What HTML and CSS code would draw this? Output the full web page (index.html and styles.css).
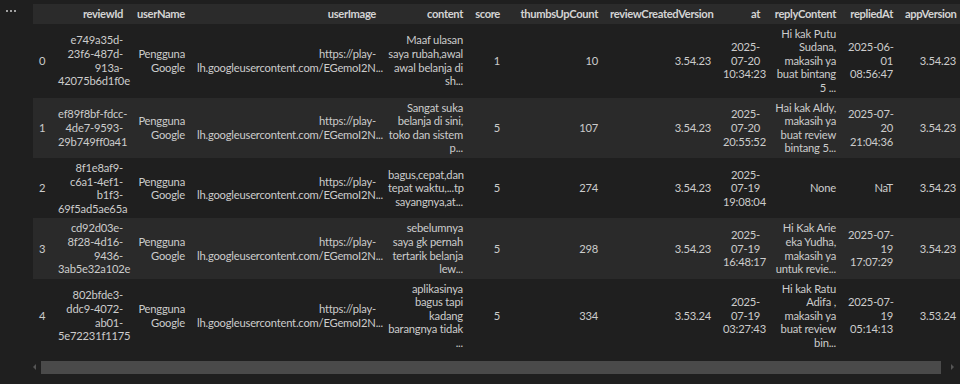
FILE: index.html
```html
<!DOCTYPE html>
<html>
<head>
<meta charset="utf-8">
<link rel="stylesheet" href="styles.css">
</head>
<body>
<div class="cell">
  <div class="gutter"><span class="dots"><i></i><i></i><i></i></span></div>
  <div class="output">
    <div class="viewport">
      <table class="df">
        <colgroup>
          <col class="c-idx"><col class="c-rid"><col class="c-un"><col class="c-ui"><col class="c-ct"><col class="c-sc"><col class="c-tu"><col class="c-rcv"><col class="c-at"><col class="c-rc"><col class="c-ra"><col class="c-av">
        </colgroup>
        <thead>
          <tr><th></th><th>reviewId</th><th>userName</th><th>userImage</th><th>content</th><th>score</th><th>thumbsUpCount</th><th>reviewCreatedVersion</th><th>at</th><th>replyContent</th><th>repliedAt</th><th>appVersion</th></tr>
        </thead>
        <tbody>
          <tr>
            <th>0</th>
            <td>e749a35d-<br>23f6-487d-<br>913a-<br>42075b6d1f0e</td>
            <td>Pengguna<br>Google</td>
            <td>https://play-<br>lh.googleusercontent.com/EGemoI2N...</td>
            <td>Maaf ulasan<br>saya rubah,awal<br>awal belanja di<br>sh...</td>
            <td>1</td><td>10</td><td>3.54.23</td>
            <td>2025-<br>07-20<br>10:34:23</td>
            <td>Hi kak Putu<br>Sudana,<br>makasih ya<br>buat bintang<br>5 ...</td>
            <td>2025-06-<br>01<br>08:56:47</td>
            <td>3.54.23</td>
          </tr>
          <tr>
            <th>1</th>
            <td>ef89f8bf-fdcc-<br>4de7-9593-<br>29b749ff0a41</td>
            <td>Pengguna<br>Google</td>
            <td>https://play-<br>lh.googleusercontent.com/EGemoI2N...</td>
            <td>Sangat suka<br>belanja di sini,<br>toko dan sistem<br>p...</td>
            <td>5</td><td>107</td><td>3.54.23</td>
            <td>2025-<br>07-20<br>20:55:52</td>
            <td>Hai kak Aldy,<br>makasih ya<br>buat review<br>bintang 5...</td>
            <td>2025-07-<br>20<br>21:04:36</td>
            <td>3.54.23</td>
          </tr>
          <tr>
            <th>2</th>
            <td>8f1e8af9-<br>c6a1-4ef1-<br>b1f3-<br>69f5ad5ae65a</td>
            <td>Pengguna<br>Google</td>
            <td>https://play-<br>lh.googleusercontent.com/EGemoI2N...</td>
            <td>bagus,cepat,dan<br>tepat waktu,...tp<br>sayangnya,at...</td>
            <td>5</td><td>274</td><td>3.54.23</td>
            <td>2025-<br>07-19<br>19:08:04</td>
            <td>None</td>
            <td>NaT</td>
            <td>3.54.23</td>
          </tr>
          <tr>
            <th>3</th>
            <td>cd92d03e-<br>8f28-4d16-<br>9436-<br>3ab5e32a102e</td>
            <td>Pengguna<br>Google</td>
            <td>https://play-<br>lh.googleusercontent.com/EGemoI2N...</td>
            <td>sebelumnya<br>saya gk pernah<br>tertarik belanja<br>lew...</td>
            <td>5</td><td>298</td><td>3.54.23</td>
            <td>2025-<br>07-19<br>16:48:17</td>
            <td>Hi Kak Arie<br>eka Yudha,<br>makasih ya<br>untuk revie...</td>
            <td>2025-07-<br>19<br>17:07:29</td>
            <td>3.54.23</td>
          </tr>
          <tr>
            <th>4</th>
            <td>802bfde3-<br>ddc9-4072-<br>ab01-<br>5e72231f1175</td>
            <td>Pengguna<br>Google</td>
            <td>https://play-<br>lh.googleusercontent.com/EGemoI2N...</td>
            <td>aplikasinya<br>bagus tapi<br>kadang<br>barangnya tidak<br>...</td>
            <td>5</td><td>334</td><td>3.53.24</td>
            <td>2025-<br>07-19<br>03:27:43</td>
            <td>Hi kak Ratu<br>Adifa ,<br>makasih ya<br>buat review<br>bin...</td>
            <td>2025-07-<br>19<br>05:14:13</td>
            <td>3.53.24</td>
          </tr>
        </tbody>
      </table>
    </div>
    <div class="hscroll">
      <span class="arrow left"></span>
      <span class="thumb"></span>
      <span class="arrow right"></span>
    </div>
  </div>
</div>
</body>
</html>
```
FILE: styles.css
```css
html, body {
  margin: 0;
  padding: 0;
  background: #1f1f1f;
  width: 960px;
  height: 384px;
  overflow: hidden;
}
body {
  font-family: Lato, "Noto Sans", sans-serif;
  color: #cccccc;
}
.cell {
  display: flex;
}
.gutter {
  width: 33px;
  flex: none;
  padding-top: 10px;
  box-sizing: border-box;
}
.dots {
  display: flex;
  gap: 2px;
  padding-left: 6px;
}
.dots i {
  width: 2px;
  height: 2px;
  background: #a0a0a0;
  display: block;
}
.output {
  flex: 1;
  min-width: 0;
  padding-top: 4px;
}
.viewport {
  overflow: hidden;
  width: 927px;
}
.df {
  border-collapse: collapse;
  border-spacing: 0;
  table-layout: fixed;
  width: 929px;
  font-size: 11.2px;
  line-height: 13.6px;
  letter-spacing: -0.2px;
}
.df th, .df td {
  padding: 3px 6px;
  text-align: right;
  vertical-align: middle;
  white-space: nowrap;
  font-weight: normal;
}
.df thead th {
  font-weight: bold;
  background: #2b2b2b;
  color: #d4d4d4;
  letter-spacing: -0.35px;
}
.df tbody th {
  text-align: left;
}
.df tbody tr:nth-child(even) {
  background: #2a2a2a;
}
.df tbody tr:nth-child(odd) {
  background: #1f1f1f;
}
.c-idx { width: 19px; }
.c-rid { width: 77px; }
.c-un { width: 62px; }
.c-ui { width: 191px; }
.c-ct { width: 87px; }
.c-sc { width: 37px; }
.c-tu { width: 98px; }
.c-rcv { width: 113px; }
.c-at { width: 49px; }
.c-rc { width: 76px; }
.c-ra { width: 57px; }
.c-av { width: 63px; }

.hscroll {
  display: flex;
  align-items: center;
  height: 13px;
  margin-top: 8px;
}
.thumb {
  height: 13px;
  width: 900px;
  margin-left: 5px;
  background: #4a4a4a;
}
.arrow {
  width: 0;
  height: 0;
  border-top: 3px solid transparent;
  border-bottom: 3px solid transparent;
}
.arrow.left {
  border-right: 3px solid #555555;
}
.arrow.right {
  margin-left: 10px;
  border-left: 3px solid #555555;
}
```
